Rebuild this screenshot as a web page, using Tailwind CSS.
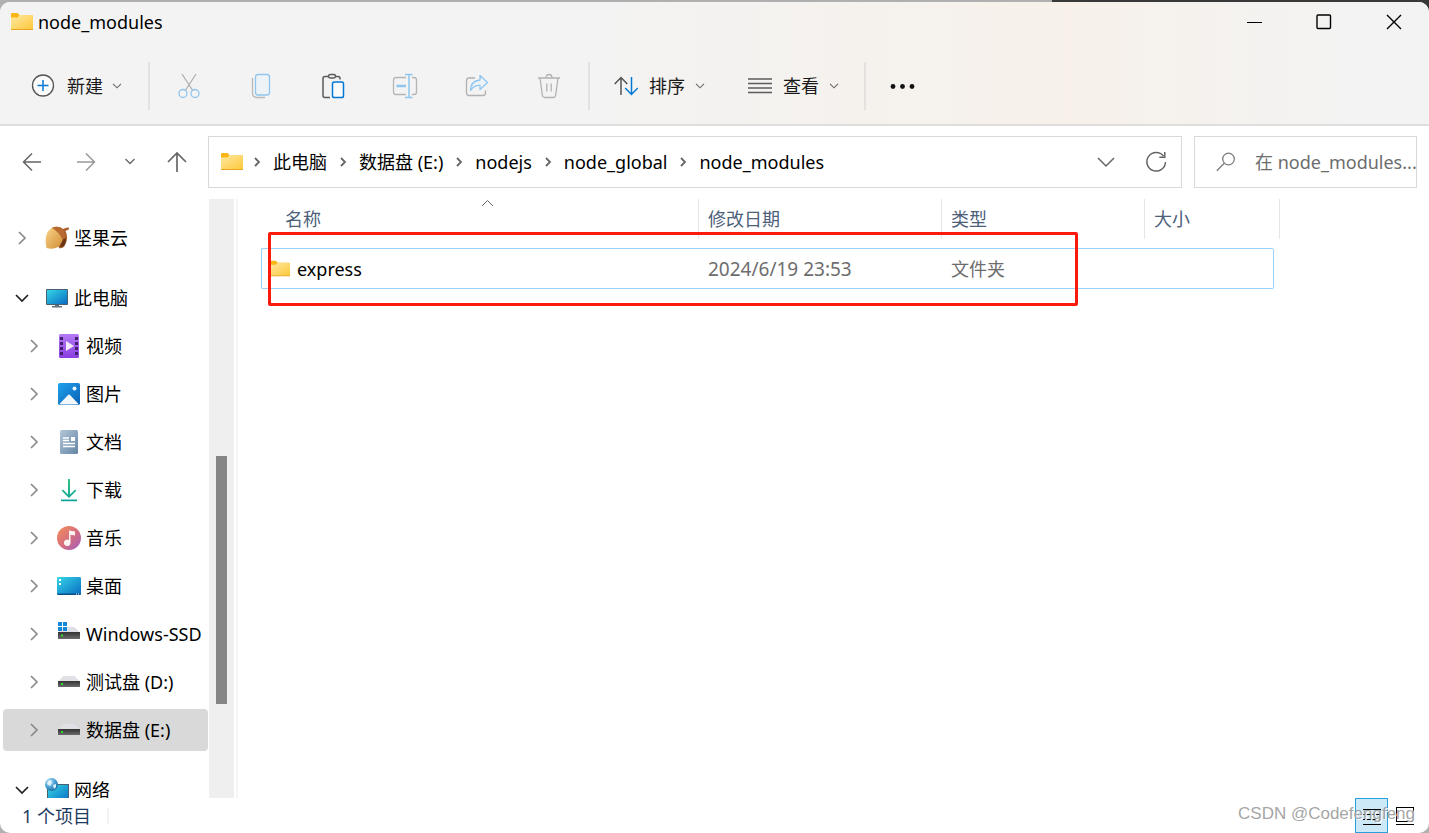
<!DOCTYPE html>
<html lang="zh-CN">
<head>
<meta charset="utf-8">
<title>node_modules</title>
<script src="https://cdn.jsdelivr.net/npm/@tailwindcss/browser@4"></script>
</head>
<body class="relative flex h-screen flex-col overflow-hidden bg-[#b0b0b0] pt-0.5 font-['Noto_Sans','Noto_Sans_CJK_SC',sans-serif] text-lg/6 text-black">
<div class="absolute top-0 right-0 h-4 w-[377px] bg-[#383838]"></div>

<svg class="absolute size-0" aria-hidden="true">
  <defs>
    <linearGradient id="gFolder" x1="0" y1="0" x2="1" y2="1"><stop offset="0" stop-color="#ffe9a3"/><stop offset="1" stop-color="#fdc83a"/></linearGradient>
    <linearGradient id="gScreen" x1="0" y1="0" x2="1" y2="1"><stop offset="0" stop-color="#34d6e6"/><stop offset="1" stop-color="#0a6cc4"/></linearGradient>
    <linearGradient id="gVideo" x1="0" y1="0" x2="0" y2="1"><stop offset="0" stop-color="#b57bf5"/><stop offset="1" stop-color="#8a3fe0"/></linearGradient>
    <linearGradient id="gPic" x1="0" y1="0" x2="1" y2="1"><stop offset="0" stop-color="#1fa3ec"/><stop offset="1" stop-color="#0b5fb4"/></linearGradient>
    <linearGradient id="gDoc" x1="0" y1="0" x2="1" y2="1"><stop offset="0" stop-color="#b3c6d8"/><stop offset="1" stop-color="#6485a6"/></linearGradient>
    <linearGradient id="gDown" x1="0" y1="0" x2="0" y2="1"><stop offset="0" stop-color="#33c481"/><stop offset="1" stop-color="#0fa39a"/></linearGradient>
    <linearGradient id="gMusic" x1="0" y1="0" x2="1" y2="1"><stop offset="0" stop-color="#f59058"/><stop offset=".5" stop-color="#d8707c"/><stop offset="1" stop-color="#a05cc0"/></linearGradient>
    <linearGradient id="gDisk" x1="0" y1="0" x2="0" y2="1"><stop offset="0" stop-color="#333"/><stop offset="1" stop-color="#6b6b6b"/></linearGradient>
    <linearGradient id="gNut" x1="0" y1="0" x2="1" y2="1"><stop offset="0" stop-color="#fbd58a"/><stop offset="1" stop-color="#d08c34"/></linearGradient>
    <radialGradient id="gGlobe" cx=".35" cy=".3" r=".8"><stop offset="0" stop-color="#bfe6fa"/><stop offset=".5" stop-color="#4aa3d6"/><stop offset="1" stop-color="#1b5f98"/></radialGradient>
    <symbol id="folder" viewBox="0 0 22 18"><path d="M0 1.2Q0 0 1.2 0H6.5L8.5 2H20V6H0Z" fill="#fbb615"/><path d="M0 4.4H6.6L8.4 2H22V16.4H0Z" fill="url(#gFolder)"/><path d="M0 16H22V17H0Z" fill="#eba51c"/></symbol>
    <symbol id="right" viewBox="0 0 12 14"><path d="M3 1 9 7 3 13" fill="none" stroke="#8a8a8a" stroke-width="1.7"/></symbol>
    <symbol id="open" viewBox="0 0 14 12"><path d="M1 3 7 9 13 3" fill="none" stroke="#222" stroke-width="1.7"/></symbol>
    <symbol id="small" viewBox="0 0 10 6"><path d="M1 .8 5 4.8 9 .8" fill="none" stroke="#6a6a6a" stroke-width="1.1"/></symbol>
    <symbol id="crumb" viewBox="0 0 8 10"><path d="M2 1 6 5 2 9" fill="none" stroke="#666" stroke-width="1.8"/></symbol>
    <symbol id="disk" viewBox="0 0 24 24"><path d="M6.5 6H17.500L22.500 11H1.500Z" fill="#dfe1e6"/><path d="M1 11H23V17H1Z" fill="url(#gDisk)"/><path d="M4 13H6V15H4Z" fill="#2be02b"/></symbol>
  </defs>
</svg>

<div class="relative flex min-h-0 flex-1 flex-col overflow-hidden rounded-[10px] bg-white">
  <header class="shrink-0 border-b-2 border-[#dfdedd] bg-linear-to-r from-[#f3f3f3] from-40% via-[#f7f1ea] via-75% to-[#f3f3f3] to-95%">
    <div class="flex h-10 items-center">
      <svg class="ml-[11px] h-[18px] w-[22px]"><use href="#folder"/></svg>
      <h1 class="ml-[5px] flex-1">node_modules</h1>
      <button aria-label="最小化" class="flex h-10 w-[69px] items-center justify-center"><svg width="16" height="16"><path d="M0 8.500H15" stroke="#000"/></svg></button>
      <button aria-label="最大化" class="flex h-10 w-[70px] items-center justify-center"><svg width="16" height="16" fill="none"><rect x="1" y="1" width="13.500" height="13.500" rx="1" stroke="#000" stroke-width="1.400"/></svg></button>
      <button aria-label="关闭" class="flex h-10 w-[70px] items-center justify-center"><svg width="16" height="16"><path d="M1 1 15 15M15 1 1 15" stroke="#000" stroke-width="1.400"/></svg></button>
    </div>
    <div class="flex items-center pt-5 pb-3.5 text-[#1a1a1a]">
      <button class="ml-[31px] flex h-12 items-center">
        <svg width="24" height="24" fill="none"><circle cx="12" cy="11.500" r="10.500" fill="#fbfbfb" stroke="#555" stroke-width="1.300"/><path d="M12 6V17M6.500 11.500H17.500" stroke="#0078d4" stroke-width="1.500"/></svg>
        <span class="ml-3">新建</span><svg class="ml-[9px] h-1.5 w-2.5"><use href="#small"/></svg>
      </button>
      <div class="ml-[26px] h-12 w-0.5 bg-[#e2e2e2]"></div>
      <div class="mx-[3px] flex">
        <button aria-label="剪切" class="flex h-12 w-[72px] items-center justify-center"><svg width="24" height="26" fill="none" stroke-width="1.300"><path d="M5 1 16 18M19 1 8 18" stroke="#b0b0b0"/><circle cx="6" cy="20.500" r="4" stroke="#8fc5ee"/><circle cx="18" cy="20.500" r="4" stroke="#8fc5ee"/></svg></button>
        <button aria-label="复制" class="flex h-12 w-[72px] items-center justify-center"><svg width="24" height="26" fill="none" stroke-width="1.300"><path d="M3.500 5V20Q3.500 24.500 8 24.500H16" stroke="#b8b8b8"/><rect x="6.500" y="1.500" width="14" height="20.500" rx="2.500" fill="#eef3f7" stroke="#8fc5ee"/></svg></button>
        <button aria-label="粘贴" class="flex h-12 w-[72px] items-center justify-center"><svg width="24" height="26" fill="none" stroke-width="1.500"><path d="M7.500 3.500H4Q2 3.500 2 5.500V22.500Q2 24.500 4 24.500H9M15 3.500H17Q19 3.500 19 5.500V6.500" stroke="#5a5a5a"/><rect x="7.500" y="1.500" width="7" height="3.500" rx="1.700" stroke="#5a5a5a"/><rect x="11.500" y="9" width="11" height="15.500" rx="1.800" fill="#f8fafc" stroke="#0078d4"/></svg></button>
        <button aria-label="重命名" class="flex h-12 w-[72px] items-center justify-center"><svg width="26" height="26" fill="none" stroke-width="1.300"><path d="M14 4.500H4Q1.500 4.500 1.500 7V19Q1.500 21.500 4 21.500H14M20 4.500H22Q24.500 4.500 24.500 7V19Q24.500 21.500 22 21.500H20" stroke="#b5b5b5"/><path d="M17 1.500V24.500M13 1.500H20.500M13 24.500H20.500" stroke="#8fc5ee" stroke-width="1.500"/><path d="M4.500 13H14" stroke="#8fc5ee" stroke-width="2.500"/></svg></button>
        <button aria-label="共享" class="flex h-12 w-[72px] items-center justify-center"><svg width="24" height="26" fill="none" stroke-width="1.300"><path d="M10 5H4Q1.500 5 1.500 7.500V20Q1.500 22.500 4 22.500H18Q20.500 22.500 20.500 20V17.500" stroke="#b0b0b0"/><path d="M15 7V2.500L22.500 9.500 15 16.500V12.500Q9 12 5.500 17.500 5.500 8 15 7Z" fill="#eef3f7" stroke="#8fc5ee" stroke-linejoin="round"/></svg></button>
        <button aria-label="删除" class="flex h-12 w-[72px] items-center justify-center"><svg width="24" height="26" fill="none" stroke="#b2b2b2" stroke-width="1.300"><path d="M1 5H23M9 5Q9 1.500 12 1.500T15 5M3 5 5.300 22Q5.600 24.500 8 24.500H16Q18.400 24.500 18.700 22L21 5M9.800 10.500V18.500M14.200 10.500V18.500"/></svg></button>
      </div>
      <div class="h-12 w-0.5 bg-[#e2e2e2]"></div>
      <button class="ml-6 flex h-12 items-center">
        <svg width="24" height="20" fill="none" stroke-width="1.500"><path d="M7 19V1.500M.7 8 7 1.500 13.300 8" stroke="#555"/><path d="M17.500 1V18.500M11.200 12 17.500 18.500 23.800 12" stroke="#0078d4"/></svg>
        <span class="ml-[11px]">排序</span><svg class="ml-2.5 h-1.5 w-2.5"><use href="#small"/></svg>
      </button>
      <button class="ml-[43px] flex h-12 items-center">
        <svg width="24" height="18" fill="none" stroke="#5c5c5c" stroke-width="1.400"><path d="M0 2H24M0 6.500H24M0 11H24M0 15.500H24"/></svg>
        <span class="ml-[11px]">查看</span><svg class="ml-2.5 h-1.5 w-2.5"><use href="#small"/></svg>
      </button>
      <div class="ml-[25px] h-12 w-0.5 bg-[#e4e1df]"></div>
      <button aria-label="更多" class="ml-6 flex h-12 items-center"><svg width="26" height="6" fill="#111"><circle cx="3" cy="3.500" r="2.400"/><circle cx="12.500" cy="3.500" r="2.400"/><circle cx="22" cy="3.500" r="2.400"/></svg></button>
    </div>
  </header>

  <div class="flex shrink-0 items-center pt-2.5 pr-3 pb-[11px]">
    <button aria-label="后退" class="flex h-10 w-16 items-center justify-center"><svg width="20" height="20" fill="none" stroke="#666" stroke-width="1.500"><path d="M19 10H1.500M10 1.500 1.500 10 10 18.500"/></svg></button>
    <button aria-label="前进" class="flex h-10 w-11 items-center justify-center"><svg width="20" height="20" fill="none" stroke="#999" stroke-width="1.500"><path d="M1 10H18.500M10 1.500 18.500 10 10 18.500"/></svg></button>
    <button aria-label="最近的位置" class="flex h-10 w-11 items-center justify-center"><svg width="12" height="8" fill="none" stroke="#666" stroke-width="1.300"><path d="M1.500 1 6 5.500 10.500 1"/></svg></button>
    <button aria-label="上移" class="flex h-10 w-[50px] items-center justify-center"><svg width="20" height="22" fill="none" stroke="#666" stroke-width="1.700"><path d="M10 21V2M1 11 10 2 19 11"/></svg></button>
    <nav aria-label="地址" class="ml-1.5 flex h-[52px] flex-1 items-center border border-[#d9d9d9] pl-3">
      <svg class="h-[18px] w-[22px]"><use href="#folder"/></svg>
      <svg class="mr-3 ml-2.5 h-2.5 w-2"><use href="#crumb"/></svg>
      <a href="#">此电脑</a>
      <svg class="mx-3 h-2.5 w-2"><use href="#crumb"/></svg>
      <a href="#">数据盘 (E:)</a>
      <svg class="mx-3 h-2.5 w-2"><use href="#crumb"/></svg>
      <a href="#">nodejs</a>
      <svg class="mx-3 h-2.5 w-2"><use href="#crumb"/></svg>
      <a href="#">node_global</a>
      <svg class="mx-3 h-2.5 w-2"><use href="#crumb"/></svg>
      <a href="#" class="flex-1">node_modules</a>
      <button aria-label="展开" class="flex h-10 w-[50px] items-center justify-center"><svg width="18" height="12" fill="none" stroke="#666" stroke-width="1.500"><path d="M1 2 9 10 17 2"/></svg></button>
      <button aria-label="刷新" class="flex h-10 w-[50px] items-center justify-center"><svg width="22" height="22" fill="none" stroke="#666" stroke-width="1.500"><path d="M20.500 11A9.300 9.300 0 1 1 18.500 5M19.800 1V6.300H14.300"/></svg></button>
    </nav>
    <label class="ml-3 flex h-[52px] w-[223px] items-center overflow-hidden border border-[#d9d9d9] pl-[21px]">
      <svg class="shrink-0" width="19" height="20" fill="none" stroke="#7d7d7d" stroke-width="1.300"><circle cx="12.500" cy="7" r="5.800"/><path d="M8.300 11.200.8 18.700"/></svg>
      <input type="text" aria-label="搜索" placeholder="在 node_modules..." class="ml-5 min-w-0 flex-1 outline-none placeholder:text-[#6d6d6d]">
    </label>
  </div>

  <div class="flex min-h-0 flex-1">
    <nav aria-label="导航窗格" class="w-[209px] shrink-0 overflow-hidden pt-[15px] whitespace-nowrap">
      <a href="#" class="flex h-12 items-center pl-4">
        <svg class="h-3.5 w-3"><use href="#right"/></svg>
        <svg class="mr-[5px] ml-[17px]" width="24" height="24"><path d="M7 2Q13-1 18 3 21 1 24 1.500L23.500 4Q21.500 4 20.500 5 24 12 20 19 18 23 14 22Z" fill="#a9602c"/><path d="M18 9Q23 11 20 18.500 18 21.500 15 21Z" fill="#6c3414"/><path d="M6 2.500Q9 0 12 2.500 17 6 18 12 18 16 13 21 8 24 1.500 22 -.5 14 2 7 4 3.500 6 2.500Z" fill="url(#gNut)"/><path d="M7 2Q13-1 18 3L21 12 17.500 13.500Q14 6 7 2Z" fill="#b86a30"/></svg>坚果云</a>
      <a href="#" class="mt-3 flex h-12 items-center pl-[15px]">
        <svg class="h-3 w-3.5"><use href="#open"/></svg>
        <svg class="mr-[5px] ml-4" width="24" height="24"><rect x="1" y="3" width="22" height="16" rx="1" fill="#48606f"/><path d="M2 4H22V18H2Z" fill="url(#gScreen)"/><path d="M10 19H14V20H17V21.500H7V20H10Z" fill="#63717b"/></svg>此电脑</a>
      <a href="#" class="flex h-12 items-center pl-7">
        <svg class="h-3.5 w-3"><use href="#right"/></svg>
        <svg class="mr-[5px] ml-[17px]" width="24" height="24"><rect x="2" width="20" height="24" rx="1.500" fill="url(#gVideo)"/><path d="M3 3H6V6H3ZM3 8H6V11H3ZM3 13H6V16H3ZM3 18H6V21H3ZM18 3H21V6H18ZM18 8H21V11H18ZM18 13H21V16H18ZM18 18H21V21H18Z" fill="#43206f"/><path d="M9 7 17 12 9 17Z" fill="#f4ecfc"/></svg>视频</a>
      <a href="#" class="flex h-12 items-center pl-7">
        <svg class="h-3.5 w-3"><use href="#right"/></svg>
        <svg class="mr-[5px] ml-[17px]" width="24" height="24"><rect x="1" y="1" width="22" height="22" rx="1.800" fill="url(#gPic)"/><circle cx="17.500" cy="6.500" r="2" fill="#e9f6ff"/><path d="M2.500 22 11 13Q12 12 13 13L21.500 22Q21 22.500 20 22.500H4Z" fill="#f3f8fd"/></svg>图片</a>
      <a href="#" class="flex h-12 items-center pl-7">
        <svg class="h-3.5 w-3"><use href="#right"/></svg>
        <svg class="mr-[5px] ml-[17px]" width="24" height="24"><rect x="3" width="18" height="24" rx="1.500" fill="url(#gDoc)"/><path d="M6 8H12M6 10.500H12M6 13.500H18M6 16.500H18" stroke="#fff" stroke-width="1.300"/><path d="M14 7H18V11H14Z" fill="#fff"/></svg>文档</a>
      <a href="#" class="flex h-12 items-center pl-7">
        <svg class="h-3.5 w-3"><use href="#right"/></svg>
        <svg class="mr-[5px] ml-[17px]" width="24" height="24"><path d="M11 1H13V16.500L18 11.500 19.300 12.800 12 20 4.700 12.800 6 11.500 11 16.500ZM4 21.500H20V23.300H4Z" fill="url(#gDown)"/></svg>下载</a>
      <a href="#" class="flex h-12 items-center pl-7">
        <svg class="h-3.5 w-3"><use href="#right"/></svg>
        <svg class="mr-[5px] ml-[17px]" width="24" height="24"><circle cx="12" cy="12" r="12" fill="url(#gMusic)"/><path d="M12 4.500 18 5.500V9.500L13.500 8.800V16.500A3.300 3.300 0 1 1 12 14Z" fill="#fdf5f2"/></svg>音乐</a>
      <a href="#" class="flex h-12 items-center pl-7">
        <svg class="h-3.5 w-3"><use href="#right"/></svg>
        <svg class="mr-[5px] ml-[17px]" width="24" height="24"><rect y="3" width="24" height="18" rx="1.200" fill="url(#gScreen)"/><path d="M.5 19.500H23.500V21H.5Z" fill="#0a4f86"/><path d="M2 5H4V7H2ZM2 9H4V11H2ZM19 19.500H20V20.500H19ZM21 19.500H22V20.500H21Z" fill="#fff"/></svg>桌面</a>
      <a href="#" class="flex h-12 items-center pl-7">
        <svg class="h-3.5 w-3"><use href="#right"/></svg>
        <svg class="mr-[5px] ml-[17px]" width="24" height="24"><path d="M6 5H17.500L22.500 10H1.500Z" fill="#dfe1e6"/><path d="M1 10H23V17H1Z" fill="url(#gDisk)"/><path d="M4 12.500H6V14.500H4Z" fill="#2be02b"/><path d="M1 0H5V4H1ZM6 0H10V4H6ZM1 5H5V9H1ZM6 5H10V9H6Z" fill="#1488d8"/></svg>Windows-SSD</a>
      <a href="#" class="flex h-12 items-center pl-7">
        <svg class="h-3.5 w-3"><use href="#right"/></svg>
        <svg class="mr-[5px] ml-[17px] h-6 w-6"><use href="#disk"/></svg>测试盘 (D:)</a>
      <a href="#" aria-current="true" class="my-[3px] mr-px ml-[3px] flex h-[42px] items-center rounded-sm bg-[#d9d9d9] pl-[25px]">
        <svg class="h-3.5 w-3"><use href="#right"/></svg>
        <svg class="mr-[5px] ml-[17px] h-6 w-6"><use href="#disk"/></svg>数据盘 (E:)</a>
      <a href="#" class="mt-[15px] flex h-12 items-center pl-[15px]">
        <svg class="h-3 w-3.5"><use href="#open"/></svg>
        <svg class="mr-[5px] ml-4" width="24" height="24"><path d="M2 6H24V24H2Z" fill="#48606f"/><path d="M3 7H23V24H3Z" fill="url(#gScreen)"/><circle cx="6.500" cy="6.500" r="6.500" fill="url(#gGlobe)"/><path d="M3 3 6 2 7 5 5 8 2 6ZM8 7 11 6 11 9 9 11Z" fill="#e2f2fa"/></svg>网络</a>
    </nav>
    <div class="w-[25px] shrink-0 bg-[#efefef]"><div class="mt-[257px] ml-[7px] h-[248px] w-[11px] bg-[#858585]"></div></div>
    <div class="ml-0.5 w-0.5 shrink-0 bg-[#f5f5f5]"></div>

    <main class="relative min-w-0 flex-1 overflow-hidden pl-[23px]">
      <table class="w-[1019px] table-fixed border-separate border-spacing-0 text-left">
        <colgroup><col class="w-[438px]"><col class="w-[243px]"><col class="w-[203px]"><col class="w-[129px]"><col class="w-[6px]"></colgroup>
        <thead class="text-[#4c607a]">
          <tr>
            <th class="h-[49px] p-0 align-top font-normal"><div class="relative ml-3.5 flex h-10 items-center border-r border-[#e5e5e5] pl-2.5">名称<svg class="absolute top-0 left-1/2 -ml-1.5" width="13" height="8" fill="none" stroke="#666"><path d="M1 7 6.500 1.500 12 7"/></svg></div></th>
            <th class="p-0 align-top font-normal"><div class="flex h-10 items-center border-r border-[#e5e5e5] pl-[9px]">修改日期</div></th>
            <th class="p-0 align-top font-normal"><div class="flex h-10 items-center border-r border-[#e5e5e5] pl-[9px]">类型</div></th>
            <th colspan="2" class="p-0 align-top font-normal"><div class="flex h-10 items-center border-r border-[#e5e5e5] pl-[9px]">大小</div></th>
          </tr>
        </thead>
        <tbody class="text-[#6d6d6d]">
          <tr>
            <td class="h-[41px] rounded-l-xs border-y border-l border-[#99d1ff] p-0 pl-2 text-black"><div class="flex items-center"><svg class="mr-[7px] h-[18px] w-5"><use href="#folder"/></svg>express</div></td>
            <td class="border-y border-[#99d1ff] p-0 pl-[9px] text-[19px]/6">2024/6/19 23:53</td>
            <td class="border-y border-[#99d1ff] p-0 pl-[9px]">文件夹</td>
            <td class="rounded-r-xs border-y border-r border-[#99d1ff] p-0"></td>
          </tr>
        </tbody>
      </table>
      <div class="absolute top-[33px] left-[30px] h-[74px] w-[810px] rounded-xs border-3 border-[#fb1a0c]"></div>
    </main>
  </div>

  <footer class="relative flex h-[35px] shrink-0 items-center text-[#1f3a5f]">
    <span class="ml-[22px]">1 个项目</span>
    <span class="ml-4 h-4 w-0.5 bg-[#f3f3f3]"></span>
    <button aria-label="详细信息" class="ml-auto flex h-[35px] w-[33px] items-center justify-center border border-[#2aa0da] bg-[#cde8f6]"><svg width="20" height="18" stroke="#000"><path d="M1 2.500H19M1 7.500H19M1 12.500H19M1 17.500H19"/></svg></button>
    <button aria-label="大图标" class="mr-[7px] flex h-[35px] w-[34px] items-center justify-center"><svg width="20" height="18" fill="none" stroke="#000"><rect x="1.500" y=".5" width="17" height="14"/><path d="M1 17.500H19"/></svg></button>
    <p class="absolute top-1 right-[14px] font-['Liberation_Sans',sans-serif] text-[17px]/6 text-[#999]/90 [text-shadow:1px_1px_0_#fff]">CSDN @Codefengfeng</p>
  </footer>
</div>
</body>
</html>
